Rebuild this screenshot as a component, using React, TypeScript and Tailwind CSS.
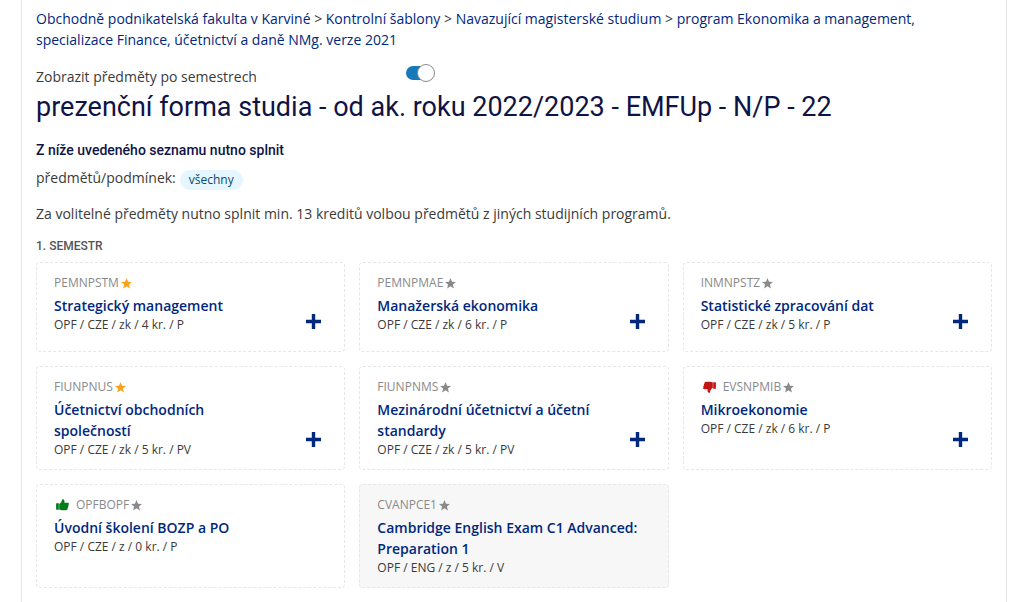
import { Fragment, useState } from "react";
import { MdStar } from "react-icons/md";

type Course = {
  code: string;
  name: string;
  meta: string;
  starred?: boolean;
  vote?: "up" | "down";
  addable?: boolean;
  muted?: boolean;
};

const courses: Course[] = [
  { code: "PEMNPSTM", name: "Strategický management", meta: "OPF / CZE / zk / 4 kr. / P", starred: true, addable: true },
  { code: "PEMNPMAE", name: "Manažerská ekonomika", meta: "OPF / CZE / zk / 6 kr. / P", addable: true },
  { code: "INMNPSTZ", name: "Statistické zpracování dat", meta: "OPF / CZE / zk / 5 kr. / P", addable: true },
  { code: "FIUNPNUS", name: "Účetnictví obchodních společností", meta: "OPF / CZE / zk / 5 kr. / PV", starred: true, addable: true },
  { code: "FIUNPNMS", name: "Mezinárodní účetnictví a účetní standardy", meta: "OPF / CZE / zk / 5 kr. / PV", addable: true },
  { code: "EVSNPMIB", name: "Mikroekonomie", meta: "OPF / CZE / zk / 6 kr. / P", vote: "down", addable: true },
  { code: "OPFBOPF", name: "Úvodní školení BOZP a PO", meta: "OPF / CZE / z / 0 kr. / P", vote: "up" },
  { code: "CVANPCE1", name: "Cambridge English Exam C1 Advanced: Preparation 1", meta: "OPF / ENG / z / 5 kr. / V", muted: true },
];

const breadcrumbs = [
  "Obchodně podnikatelská fakulta v Karviné",
  "Kontrolní šablony",
  "Navazující magisterské studium",
  "program Ekonomika a management, specializace Finance, účetnictví a daně NMg. verze 2021",
];

function Thumb({ direction }: { direction: "up" | "down" }) {
  return (
    <svg
      viewBox="0 0 13 12"
      className={`mr-[7px] ml-[2px] h-[12px] w-[13px] ${direction === "up" ? "text-[#007d1a]" : "-scale-100 text-[#c41414]"}`}
      fill="currentColor"
      aria-hidden
    >
      <path d="M.5 4.200h2.300v6.500H.5q-.4 0-.4-.4V4.600q0-.4.4-.4z" />
      <path d="M3.200 4.900C4.400 4.300 5.400 3.300 5.700 2L5.900.8C6.100.1 7 0 7.600.4c.9.6 1.100 2 .7 3.300h3.400c.8 0 1.300.5 1.200 1.200 0 .4-.2.700-.5.900.4.7.2 1.400-.3 1.800.2.700 0 1.300-.5 1.600.1 1.200-.5 2-1.600 2H6.400c-1.200 0-2.200-.3-3.200-.8z" />
    </svg>
  );
}

function CourseCard({ course }: { course: Course }) {
  return (
    <li
      className={`flex min-h-[90px] rounded-[4px] border border-dashed border-[#e6e6e6] pt-[9px] pr-[22px] pb-[10px] pl-[17px] ${
        course.muted ? "bg-[#f7f7f7]" : "bg-white"
      }`}
    >
      <div className="min-w-0 flex-1">
        <div className="mb-px flex h-[22px] items-center text-[12px] leading-[18px] text-[#8a8a8a]">
          {course.vote && <Thumb direction={course.vote} />}
          <span>{course.code}</span>
          <MdStar className={`mt-px ml-px size-[13px] ${course.starred ? "text-[#faa21b]" : "text-[#8a8a8a]"}`} aria-hidden />
        </div>
        <a href="#" className="block font-semibold text-[#00287d]">
          {course.name}
        </a>
        <p className="text-[12px] leading-[18px] text-[#3a3a3a]">{course.meta}</p>
      </div>
      {course.addable && (
        <button
          type="button"
          aria-label={`Přidat ${course.code}`}
          className="mb-[11px] ml-7 flex size-4 shrink-0 self-end text-[#00287d]"
        >
          <svg viewBox="0 0 16 16" className="size-4" aria-hidden>
            <path d="M5.800 0h3.400v5.800H15v3.400H9.200V15H5.800V9.200H0V5.800h5.800z" fill="currentColor" />
          </svg>
        </button>
      )}
    </li>
  );
}

export default function App() {
  const [bySemester, setBySemester] = useState(true);
  return (
    <div className="min-h-screen overflow-x-hidden bg-white pr-[10px] pl-[21px] font-['Open_Sans','Noto_Sans',sans-serif] text-[14px] leading-[21px] text-[#3a3a3a]">
      <main className="min-h-screen border-x border-[#e6e6e6] px-[14px] pt-2 pb-[14px]">
        <nav aria-label="Drobečková navigace">
          {breadcrumbs.map((crumb, i) => (
            <Fragment key={crumb}>
              {i > 0 && " > "}
              <a href="#" className="text-[#00287d]">{crumb}</a>
            </Fragment>
          ))}
        </nav>

        <div className="mt-[14px] flex items-start">
          <label htmlFor="semesters" className="mt-[2px] w-[370px]">Zobrazit předměty po semestrech</label>
          <span className="relative flex h-[18px] w-[29px] items-center">
            <input
              id="semesters"
              type="checkbox"
              role="switch"
              checked={bySemester}
              onChange={(e) => setBySemester(e.target.checked)}
              className="peer h-[14px] w-[28px] appearance-none rounded-full bg-[#b5b5b5] checked:bg-[#1879ba]"
            />
            <span className="pointer-events-none absolute top-0 left-0 size-[18px] rounded-full border border-[#8a8a8a] bg-white peer-checked:left-[11px]" />
          </span>
        </div>

        <h1 className="mt-[2px] font-[Roboto,sans-serif] text-[27px] leading-[36px] text-[#0f1446]">
          prezenční forma studia - od ak. roku 2022/2023 - EMFUp - N/P - 22
        </h1>
        <h2 className="mt-[15px] font-[Roboto,sans-serif] text-[14px] font-medium leading-[21px] text-[#0f1446]">
          Z níže uvedeného seznamu nutno splnit
        </h2>
        <p className="mt-[6px] flex items-start">
          předmětů/podmínek:
          <span className="mt-[3px] ml-1 rounded-full bg-[#e5f6ff] px-[9px] text-[12px] leading-[20px] text-[#0a4a6e]">všechny</span>
        </p>
        <p className="mt-[13px]">Za volitelné předměty nutno splnit min. 13 kreditů volbou předmětů z jiných studijních programů.</p>
        <h3 className="mt-[13px] font-[Roboto,sans-serif] text-[12px] font-medium leading-[18px] text-[#555555]">1. SEMESTR</h3>
        <ul className="mt-[7px] grid grid-cols-3 gap-[14px]">
          {courses.map((course) => (
            <CourseCard key={course.code} course={course} />
          ))}
        </ul>
      </main>
    </div>
  );
}
